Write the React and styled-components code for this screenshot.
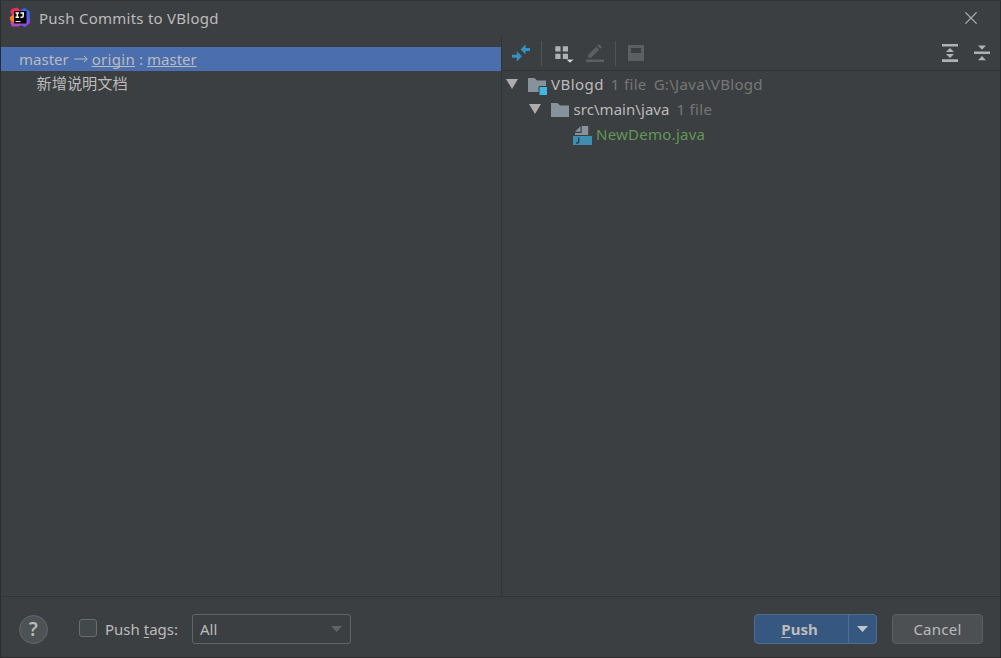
import React from "react";
import styled, { createGlobalStyle } from "styled-components";

const files = [
  { key: 1, depth: 0, icon: "module", open: true, name: "VBlogd", spacing: 0.45, info: ["1 file", "G:\\Java\\VBlogd"] },
  { key: 2, depth: 1, icon: "folder", open: true, name: "src\\main\\java", spacing: 0.05, info: ["1 file"] },
  { key: 3, depth: 2, icon: "java", name: "NewDemo.java", spacing: 0.25, added: true, info: [] },
];

const Logo = () => (
  <svg width="22" height="22" viewBox="0 0 22 22">
    <defs>
      <linearGradient id="right" x1="0" y1="0" x2="0.4" y2="1">
        <stop offset="0" stopColor="#2b6cf0" />
        <stop offset="0.6" stopColor="#3f62f2" />
        <stop offset="1" stopColor="#8a4ce0" />
      </linearGradient>
      <linearGradient id="left" x1="0" y1="0" x2="0" y2="1">
        <stop offset="0" stopColor="#fe2857" />
        <stop offset="0.5" stopColor="#f4375f" />
        <stop offset="0.75" stopColor="#d8488f" />
        <stop offset="1" stopColor="#a04ad8" />
      </linearGradient>
    </defs>
    <path d="M12 3 15.500 1 20.800 4.500V16L16 20 9 17z" fill="url(#right)" />
    <path d="M2.500 2 8 .5 12 4V18L9.500 19.500H3L1.500 16 3 8 1.500 5z" fill="url(#left)" />
    <path d="M.8 10 5 7.500V15L1.300 13.500z" fill="#fc801d" />
    <rect x="5" y="4" width="12.500" height="12.500" fill="#050505" />
    <path d="M6.500 6H10M8.300 6V10.300M6.500 10.300H10M11.500 6H15M14.200 6V9.200Q14.200 10.300 13 10.300H11.500" fill="none" stroke="#fff" strokeWidth="1.400" />
    <rect x="6.500" y="14" width="5" height="1" fill="#ddd" />
  </svg>
);

const CloseIcon = () => (
  <svg width="12" height="12" viewBox="0 0 12 12">
    <path d="M.4.4 11.600 11.600M11.600.4.4 11.600" stroke="#b4b6b7" strokeWidth="1.200" />
  </svg>
);

const DiffIcon = () => (
  <svg width="20" height="20" viewBox="0 0 20 20" fill="#3592c4">
    <path d="M9.600 6.500 14.600 1.300V5H19V8H14.600V11.500z" />
    <path d="M10.800 13.300 5.800 18.500V14.800H1V11.800H5.800V8.300z" />
  </svg>
);

const GroupIcon = () => (
  <svg width="20" height="20" viewBox="0 0 20 20">
    <path d="M1.300 3.300H6.500V8.500H1.300zM8.800 3.300H14V8.500H8.800zM1.300 10.800H6.500V16H1.300zM8.800 10.800H14V16H8.800z" fill="#afb1b3" />
    <path d="M12 16.300H20L16 20z" fill="#d4d6d7" stroke="#3c3f41" strokeWidth=".5" />
  </svg>
);

const EditIcon = () => (
  <svg width="18" height="20" viewBox="0 0 18 20" fill="#5c5e60">
    <path d="M2 12 10.300 3.700 13.300 6.700 5 14.800H2z" />
    <path d="M11.400 2.800 13.200 1.300 16 3.900 14.400 5.700z" />
    <path d="M0 16.500H18V19H0z" />
  </svg>
);

const PreviewIcon = () => (
  <svg width="16" height="16" viewBox="0 0 16 16">
    <path fillRule="evenodd" d="M0 0H16V16H0zM3 3V8H13V3z" fill="#5c5e60" />
  </svg>
);

const ExpandIcon = () => (
  <svg width="16" height="18" viewBox="0 0 16 18" fill="#afb1b3">
    <path d="M0 0H16V2.500H0zM0 15.300H16V17.900H0zM8 3.900 12 7.900H4zM4 10H12L8 14z" />
  </svg>
);

const CollapseIcon = () => (
  <svg width="16" height="18" viewBox="0 0 16 18" fill="#afb1b3">
    <path d="M0 7.500H16V10H0zM4 1.400H12L8 5.800zM8 11.900 12 16.300H4z" />
  </svg>
);

const Triangle = ({ w, h, color }) => (
  <svg width={w} height={h} viewBox="0 0 12 10" preserveAspectRatio="none">
    <path d="M0 0H12L6 10z" fill={color} />
  </svg>
);

const FileIcon = ({ type }) => {
  if (type === "java") {
    return (
      <svg width="20" height="20" viewBox="0 0 20 20">
        <path d="M3 6.800 8.500 1.200V6.800z" fill="#9aa7b0" opacity=".8" />
        <path d="M9.700 1H16.200V10H3V8.100H9.700z" fill="#87939a" />
        <rect x="1" y="11" width="19" height="9" fill="#3e8eb0" />
        <path d="M6.700 12.500V16.500Q6.700 18 5.300 18H4" fill="none" stroke="#25414e" strokeWidth="1.400" />
      </svg>
    );
  }
  return (
    <svg width="20" height="20" viewBox="0 0 20 20">
      <path d="M1 3H7.500L10 5.500H19V17H1z" fill="#87939a" />
      {type === "module" && (
        <path d="M12 11.500H20.500V20.500H12z" fill="#40b6e0" stroke="#3c3f41" strokeWidth="1" />
      )}
    </svg>
  );
};

const FileTree = () => {
  const rows = files.map((file) => (
    <TreeRow key={file.key} $depth={file.depth}>
      <Toggle>{file.open && <Triangle w={12} h={10} color="#adadad" />}</Toggle>
      <FileIcon type={file.icon} />
      <FileName $added={file.added} $spacing={file.spacing}>
        {file.name}
      </FileName>
      {file.info.map((text) => (
        <FileInfo key={text}>{text}</FileInfo>
      ))}
    </TreeRow>
  ));
  return <Tree>{rows}</Tree>;
};

const App = () => {
  return (
    <>
      <GlobalStyle />
      <Window>
        <TitleBar>
          <Logo />
          <Title>Push Commits to VBlogd</Title>
          <CloseIcon />
        </TitleBar>

        <Body>
          <Commits>
            <Branch>
              <span>master</span>
              <Arrow width="14" height="8" viewBox="0 0 14 8">
                <path d="M0 4H13M10 1 13.300 4 10 7" fill="none" stroke="#bbb" />
              </Arrow>
              <Link $spacing={0.3}>origin</Link>
              <Colon>:</Colon>
              <Link $spacing={0}>master</Link>
            </Branch>
            <Commit>新增说明文档</Commit>
          </Commits>

          <Changes>
            <Toolbar>
              <DiffIcon />
              <Separator $left={10} $right={12} />
              <GroupIcon />
              <EditGap />
              <EditIcon />
              <Separator $left={11} $right={12} />
              <PreviewIcon />
              <TreeActions>
                <ExpandIcon />
                <CollapseIcon />
              </TreeActions>
            </Toolbar>
            <FileTree />
          </Changes>
        </Body>

        <Footer>
          <Help>?</Help>
          <Checkbox />
          <TagsLabel>
            Push <u>t</u>ags:
          </TagsLabel>
          <Select>
            <span>All</span>
            <Triangle w={11} h={6} color="#606263" />
          </Select>
          <PushButton>
            <PushText>
              <u>P</u>ush
            </PushText>
            <PushMore>
              <Triangle w={11} h={6} color="#c3c6c9" />
            </PushMore>
          </PushButton>
          <CancelButton>Cancel</CancelButton>
        </Footer>
      </Window>
    </>
  );
};

export default App;

const GlobalStyle = createGlobalStyle`
  body {
    margin: 0;
    background: #3c3f41;
  }
  * {
    box-sizing: border-box;
  }
  svg {
    display: block;
    flex: none;
  }
  u {
    text-underline-offset: 2px;
  }
`;

const Window = styled.div`
  display: flex;
  flex-direction: column;
  width: 1001px;
  height: 658px;
  border: 1px solid #2b2c2d;
  border-top-color: #333638;
  background-color: #3c3f41;
  color: #bbbbbb;
  font-family: "Noto Sans", "Noto Sans CJK SC", sans-serif;
  font-size: 15px;
  white-space: pre;
  overflow: hidden;
`;

const TitleBar = styled.div`
  display: flex;
  align-items: center;
  height: 35px;
  padding: 0 23px 2px 8px;
`;

const Title = styled.span`
  flex: 1;
  margin-left: 8px;
  line-height: 20px;
  letter-spacing: 0.25px;
`;

const Body = styled.div`
  display: flex;
  height: 560px;
`;

const Commits = styled.div`
  width: 500px;
  padding-top: 11px;
`;

const Branch = styled.div`
  display: flex;
  align-items: center;
  height: 24px;
  padding-left: 18px;
  background-color: #4b6eaf;
`;

const Arrow = styled.svg`
  margin: 0 4px 1px 5px;
`;

const Link = styled.span`
  letter-spacing: ${(props) => props.$spacing}px;
  text-decoration: underline;
  text-underline-offset: 1px;
  text-decoration-skip-ink: none;
`;

const Colon = styled.span`
  margin: 0 4px;
`;

const Commit = styled.div`
  height: 25px;
  padding-left: 35.500px;
  font-size: 15.200px;
  line-height: 25px;
`;

const Changes = styled.div`
  flex: 1;
  border-left: 1px solid #323536;
`;

const Toolbar = styled.div`
  display: flex;
  align-items: center;
  height: 35px;
  padding: 0 10px 0 9px;
  border-bottom: 1px solid #323334;
`;

const Separator = styled.div`
  width: 1px;
  height: 25px;
  margin: 0 ${(props) => props.$right}px 0 ${(props) => props.$left}px;
  background-color: #515456;
`;

const EditGap = styled.div`
  width: 12px;
`;

const TreeActions = styled.div`
  display: flex;
  gap: 16px;
  margin-left: auto;
`;

const Tree = styled.div`
  padding-top: 1px;
`;

const TreeRow = styled.div`
  display: flex;
  align-items: center;
  height: 25px;
  padding-left: ${(props) => 4 + props.$depth * 22.500}px;
`;

const Toggle = styled.div`
  width: 21px;
  padding-bottom: 2px;
`;

const FileName = styled.span`
  margin-left: 4px;
  padding-bottom: 2px;
  color: ${(props) => (props.$added ? "#629755" : "#bbbbbb")};
  letter-spacing: ${(props) => props.$spacing}px;
`;

const FileInfo = styled.span`
  margin-left: 7px;
  padding-bottom: 2px;
  color: #777777;
  letter-spacing: 0.320px;
`;

const Footer = styled.div`
  display: flex;
  align-items: center;
  height: 61px;
  padding: 4px 17px 0 18px;
  border-top: 1px solid #323334;
`;

const Help = styled.div`
  width: 29px;
  height: 29px;
  border: 1px solid #646869;
  border-radius: 50%;
  background-color: #4e5254;
  font-size: 19px;
  font-weight: 600;
  line-height: 27px;
  text-align: center;
`;

const Checkbox = styled.div`
  width: 18px;
  height: 18px;
  margin: 0 1px 2px 31px;
  border: 1px solid #6b6b6b;
  border-radius: 3px;
  background-color: #43494a;
`;

const TagsLabel = styled.span`
  width: 87px;
  margin-left: 7px;
`;

const Select = styled.div`
  display: flex;
  justify-content: space-between;
  align-items: center;
  width: 159px;
  height: 30px;
  padding: 0 8px 0 7px;
  border: 1px solid #646464;
  border-radius: 3px;
`;

const PushButton = styled.div`
  display: flex;
  width: 123px;
  height: 30px;
  margin-left: auto;
  border: 1px solid #4c708c;
  border-radius: 4px;
  background-color: #365880;
`;

const PushText = styled.div`
  width: 94px;
  padding-right: 4px;
  border-right: 1px solid #4c708c;
  font-weight: 700;
  line-height: 28px;
  text-align: center;
`;

const PushMore = styled.div`
  display: flex;
  flex: 1;
  align-items: center;
  justify-content: center;
`;

const CancelButton = styled.div`
  width: 91px;
  height: 30px;
  margin-left: 15px;
  border: 1px solid #5e6060;
  border-radius: 4px;
  background-color: #4c5052;
  letter-spacing: 0.25px;
  line-height: 28px;
  text-align: center;
`;
